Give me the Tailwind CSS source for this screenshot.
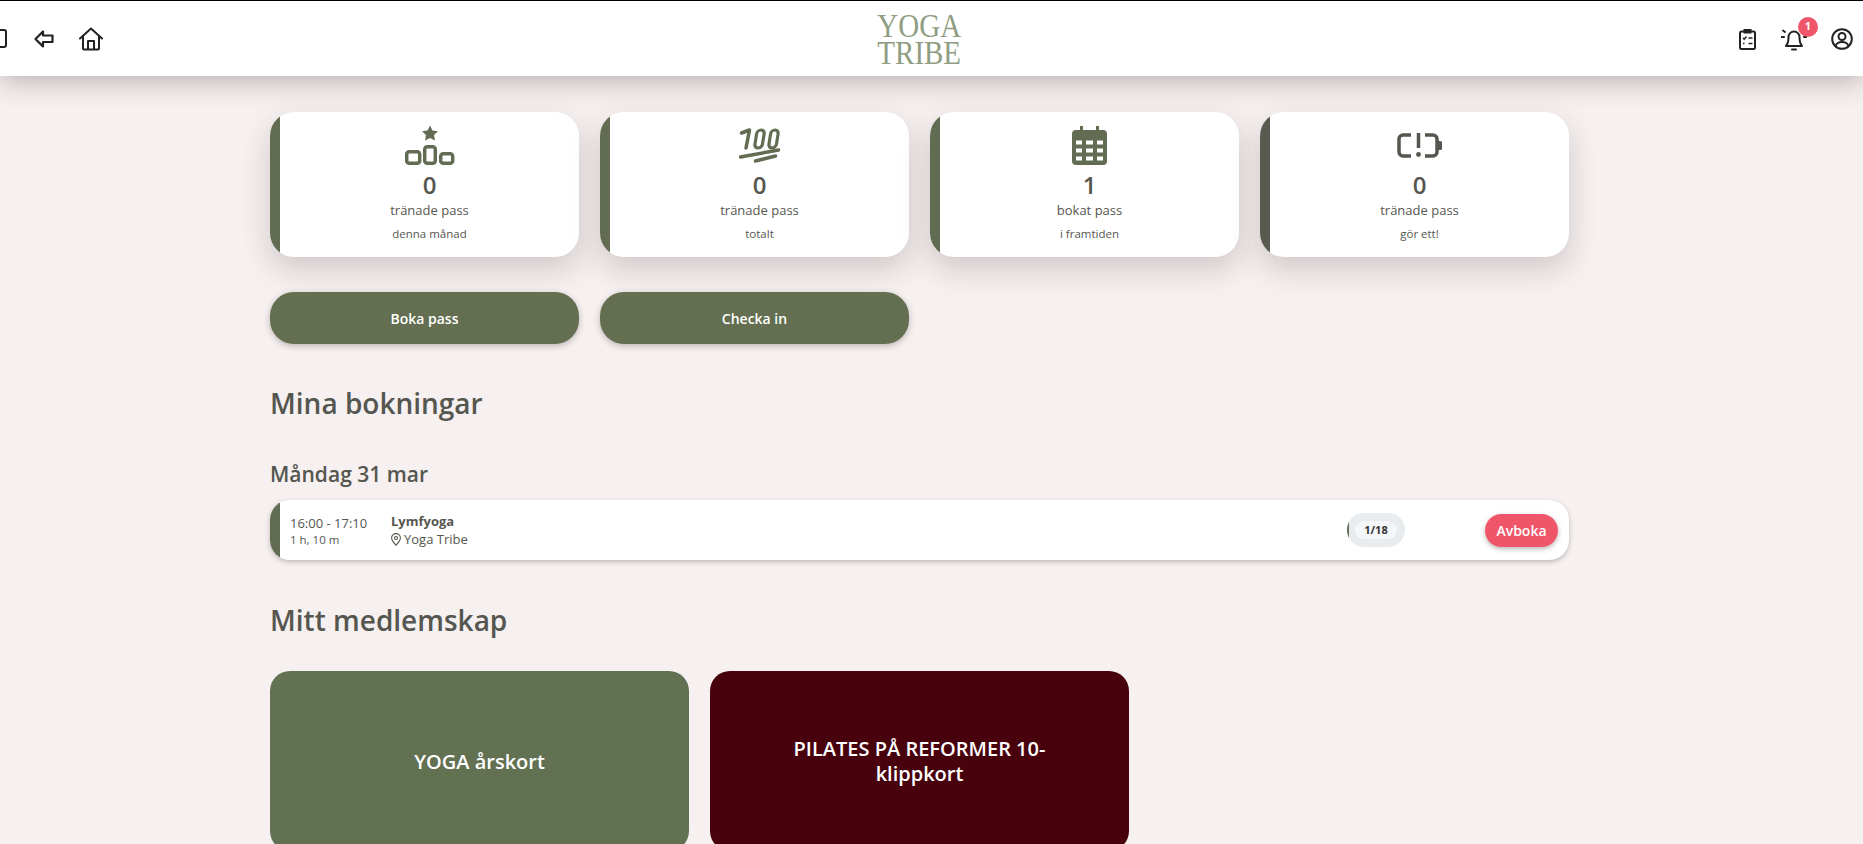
<!DOCTYPE html>
<html lang="sv">
<head>
    <meta charset="UTF-8">
    <title>Yoga Tribe</title>
    <script src="https://cdn.jsdelivr.net/npm/@tailwindcss/browser@4"></script>
</head>
<body class="h-screen overflow-hidden bg-[#f6f0f0] font-['Open_Sans',sans-serif] text-[#55564f]">
    <!-- Header -->
    <header class="relative z-10 flex h-[76px] items-center border-t border-black bg-white shadow-[0_5px_28px_rgba(60,40,40,0.32)]">
        <div class="flex w-[877px] shrink-0 items-center">
            <svg class="ml-[-9px] h-[19px] w-[16px]" viewBox="0 0 16 19" fill="none" stroke="#222" stroke-width="2"><rect x="1" y="1" width="14" height="17" rx="2"/></svg>
            <svg class="ml-[27px] h-[18px] w-[20px]" viewBox="0 0 20 18" fill="none" stroke="#222" stroke-width="2.200" stroke-linejoin="round"><path d="M1.500 9 9 1.500V5.500H18.500V12H9V16.500Z"/></svg>
            <svg class="ml-[25px] h-[24px] w-[24px]" viewBox="0 0 24 24" fill="none" stroke="#222" stroke-width="2" stroke-linecap="round" stroke-linejoin="round"><path d="M1 11.500 12 1.500l11 10"/><path d="M4 9v12.500a1 1 0 0 0 1 1h14a1 1 0 0 0 1-1V9"/><path d="M9 22v-8h6v8"/></svg>
        </div>
        <div class="flex w-[84px] shrink-0 flex-col items-center font-['Liberation_Serif',serif] text-[23px] leading-[27px] text-[#8f9d82]">
            <span class="scale-x-[1.26] scale-y-[1.5]">YOGA</span>
            <span class="scale-x-[1.26] scale-y-[1.5]">TRIBE</span>
        </div>
        <div class="flex flex-1 items-center justify-end gap-6 pr-[10px]">
            <svg class="h-[22px] w-[18px]" viewBox="0 0 18 22" fill="none" stroke="#222" stroke-width="2"><rect x="1" y="3.500" width="15" height="17.500" rx="1.500"/><path d="M5.500 4V2h6V4.500h-6Z" fill="#222"/><path d="M4 10l1.200 1.200L7.500 8.500M9.500 10h4M4 15.500h1.500M9.500 15.500h4" stroke-width="1.500"/></svg>
            <div class="relative">
                <svg class="h-[24px] w-[26px]" viewBox="0 0 26 24" fill="none" stroke="#222" stroke-width="2" stroke-linecap="round" stroke-linejoin="round"><path d="M5 19c1.800-2 2.500-4 2.500-9a5.500 5.500 0 0 1 11 0c0 5 .7 7 2.500 9Z"/><path d="M11 22.500h4"/><path d="M.5 10h2.500M2 3.500l2 1.500M23 10h2.500"/></svg>
                <span class="absolute right-[-11px] top-[-10px] flex h-[20px] w-[20px] items-center justify-center rounded-full bg-[#f0566a] text-[11px] font-bold text-white">1</span>
            </div>
            <svg class="h-[22px] w-[22px]" viewBox="0 0 22 22" fill="none" stroke="#222" stroke-width="2"><circle cx="11" cy="11" r="9.800"/><circle cx="11" cy="8.500" r="3.500"/><path d="M4.500 18c1-3 3-4 6.500-4s5.500 1 6.500 4"/></svg>
        </div>
    </header>

    <main class="ml-[270px] w-[1299px] pt-[36px]">
        <!-- Stats -->
        <div class="grid grid-cols-4 gap-[21px]">
            <div class="flex h-[145px] overflow-hidden rounded-[24px] bg-white shadow-[0_12px_30px_rgba(60,40,40,0.2)]">
                <div class="w-[10px] bg-[#626c52]"></div>
                <div class="flex flex-1 flex-col items-center">
                    <svg class="mt-[13px] h-[40px] w-[50px]" viewBox="0 0 50 40" fill="#626c52"><path d="M25 .5l2.500 5 5.500.8-4 3.800 1 5.500-5-2.600-5 2.600 1-5.500-4-3.800 5.500-.8Z"/><g fill="none" stroke="#626c52" stroke-width="3.500"><rect x="1.700" y="26.700" width="13" height="11.600" rx="2.500"/><rect x="19.700" y="21.700" width="10.600" height="16.600" rx="2.500"/><rect x="35.700" y="28.700" width="12" height="9.600" rx="2.500"/></g></svg>
                    <p class="mt-[6px] text-[24px] font-semibold leading-[28px]">0</p>
                    <p class="mt-[1px] text-[13px] leading-[20px]">tränade pass</p>
                    <p class="mt-[6px] text-[11.500px] leading-[16px]">denna månad</p>
                </div>
            </div>
            <div class="flex h-[145px] overflow-hidden rounded-[24px] bg-white shadow-[0_12px_30px_rgba(60,40,40,0.2)]">
                <div class="w-[10px] bg-[#626c52]"></div>
                <div class="flex flex-1 flex-col items-center">
                    <svg class="mt-[13px] h-[40px] w-[42px]" viewBox="0 0 42 40" fill="none" stroke="#626c52" stroke-linecap="round"><path d="M2.500 8l8-3L7 23" stroke-width="3.500" stroke-linejoin="round"/><rect x="15.500" y="5" width="7.500" height="18" rx="3.700" stroke-width="3.200" transform="skewX(-9) translate(3.500 0)"/><rect x="29.500" y="5" width="7.500" height="18" rx="3.700" stroke-width="3.200" transform="skewX(-9) translate(3.500 0)"/><path d="M1.500 32l38-7" stroke-width="3.500"/><path d="M16.500 36l20-5" stroke-width="3.500"/></svg>
                    <p class="mt-[6px] text-[24px] font-semibold leading-[28px]">0</p>
                    <p class="mt-[1px] text-[13px] leading-[20px]">tränade pass</p>
                    <p class="mt-[6px] text-[11.500px] leading-[16px]">totalt</p>
                </div>
            </div>
            <div class="flex h-[145px] overflow-hidden rounded-[24px] bg-white shadow-[0_12px_30px_rgba(60,40,40,0.2)]">
                <div class="w-[10px] bg-[#626c52]"></div>
                <div class="flex flex-1 flex-col items-center">
                    <svg class="mt-[13px] h-[40px] w-[35px]" viewBox="0 0 35 40"><path d="M8 1h3v4h13V1h3v4h4a4 4 0 0 1 4 4v27a4 4 0 0 1-4 4H4a4 4 0 0 1-4-4V9a4 4 0 0 1 4-4h4Z" fill="#626c52"/><path fill="#fff" d="M4 15.500h6v4H4ZM14 15.500h7v4h-7ZM25 15.500h6v4h-6ZM4 23.500h6v4H4ZM14 23.500h7v4h-7ZM25 23.500h6v4h-6ZM4 31.500h6v4H4ZM14 31.500h7v4h-7ZM25 31.500h6v4h-6Z"/></svg>
                    <p class="mt-[6px] text-[24px] font-semibold leading-[28px]">1</p>
                    <p class="mt-[1px] text-[13px] leading-[20px]">bokat pass</p>
                    <p class="mt-[6px] text-[11.500px] leading-[16px]">i framtiden</p>
                </div>
            </div>
            <div class="flex h-[145px] overflow-hidden rounded-[24px] bg-white shadow-[0_12px_30px_rgba(60,40,40,0.2)]">
                <div class="w-[10px] bg-[#585b50]"></div>
                <div class="flex flex-1 flex-col items-center">
                    <svg class="mt-[13px] h-[40px] w-[46px]" viewBox="0 0 46 40" fill="none" stroke="#55564f" stroke-width="3.500"><path d="M14 10H6a4 4 0 0 0-4 4v13a4 4 0 0 0 4 4h8"/><path d="M28 10h8a4 4 0 0 1 4 4v13a4 4 0 0 1-4 4h-8"/><path d="M21.500 8v15"/><circle cx="21.500" cy="29.500" r="2.400" fill="#55564f" stroke="none"/><path d="M41 16h2.500a1.500 1.500 0 0 1 1.500 1.500v6a1.500 1.500 0 0 1-1.500 1.500H41Z" fill="#55564f" stroke="none"/></svg>
                    <p class="mt-[6px] text-[24px] font-semibold leading-[28px]">0</p>
                    <p class="mt-[1px] text-[13px] leading-[20px]">tränade pass</p>
                    <p class="mt-[6px] text-[11.500px] leading-[16px]">gör ett!</p>
                </div>
            </div>
        </div>

        <!-- Actions -->
        <div class="mt-[35px] grid grid-cols-4 gap-[21px]">
            <button class="h-[52px] rounded-[24px] bg-[#636f50] text-[14px] font-semibold text-white shadow-[0_2px_6px_rgba(60,40,40,0.3)]">Boka pass</button>
            <button class="h-[52px] rounded-[24px] bg-[#636f50] text-[14px] font-semibold text-white shadow-[0_2px_6px_rgba(60,40,40,0.3)]">Checka in</button>
        </div>

        <h2 class="mt-[40px] text-[28px] font-semibold leading-[38px]">Mina bokningar</h2>
        <h3 class="mt-[37px] text-[21px] font-semibold leading-[30px]">Måndag 31 mar</h3>

        <!-- Booking -->
        <div class="mt-[11px] flex h-[60px] items-center overflow-hidden rounded-[20px] bg-white shadow-[0_2px_5px_rgba(60,40,40,0.28)]">
            <div class="h-full w-[10px] bg-[#626c52]"></div>
            <div class="ml-[10px] w-[101px] pt-[1px]">
                <p class="text-[13px] leading-[17px]">16:00 - 17:10</p>
                <p class="text-[11.500px] leading-[15px]">1 h, 10 m</p>
            </div>
            <div class="flex-1 pt-[1px]">
                <p class="text-[13px] font-bold leading-[17px]">Lymfyoga</p>
                <p class="flex items-center gap-[3px] text-[13px] leading-[19px]">
                    <svg class="h-[13px] w-[10px]" viewBox="0 0 10 13" fill="none" stroke="#55564f" stroke-width="1.100"><path d="M5 12.300C3 10 .6 7.500.6 5a4.400 4.400 0 0 1 8.800 0C9.400 7.500 7 10 5 12.300Z"/><circle cx="5" cy="5" r="1.500"/></svg>
                    Yoga Tribe
                </p>
            </div>
            <div class="flex h-[34px] w-[58px] items-center overflow-hidden rounded-full bg-[#e9ecef]">
                <div class="h-[18px] w-[2px] bg-[#626c52]"></div>
                <span class="ml-[6px] flex h-[18px] w-[42px] items-center justify-center rounded-full bg-[#f5f6f8] text-[11px] font-bold text-[#333]">1/18</span>
            </div>
            <button class="ml-[80px] mr-[11px] h-[33px] w-[73px] rounded-full bg-[#f0566a] text-[14px] font-semibold text-white shadow-[0_2px_5px_rgba(60,40,40,0.35)]">Avboka</button>
        </div>

        <h2 class="mt-[41px] text-[28px] font-semibold leading-[38px]">Mitt medlemskap</h2>

        <!-- Memberships -->
        <div class="mt-[32px] flex gap-[21px]">
            <div class="flex h-[180px] w-[419px] items-center justify-center rounded-[20px] bg-[#637153] px-[60px] text-center text-[20px] font-semibold leading-[25px] text-white">YOGA årskort</div>
            <div class="flex h-[180px] w-[419px] items-center justify-center rounded-[20px] bg-[#48020d] px-[60px] text-center text-[20px] font-semibold leading-[25px] text-white">PILATES PÅ REFORMER 10-klippkort</div>
        </div>
    </main>
</body>
</html>
